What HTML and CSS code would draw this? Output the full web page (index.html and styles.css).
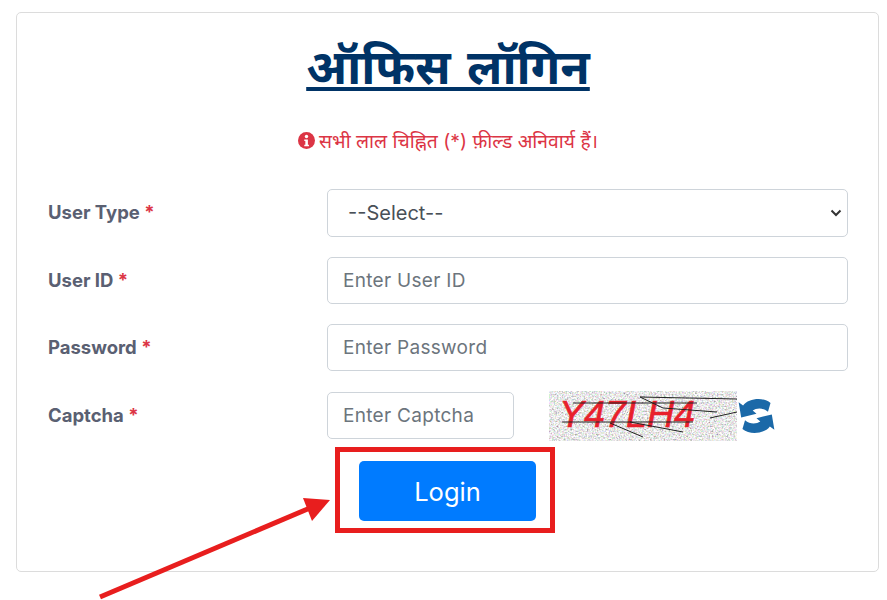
FILE: index.html
```html
<!DOCTYPE html>
<html lang="hi">
<head>
    <meta charset="UTF-8">
    <meta name="viewport" content="width=device-width, initial-scale=1.0">
    <title>ऑफिस लॉगिन</title>
    <link rel="stylesheet" href="styles.css">
</head>
<body>
    <div class="login-card">
        <h1 class="title">ऑफिस लॉगिन</h1>
        <p class="notice">
            <svg class="notice-icon" viewBox="0 0 16 16"><circle cx="8" cy="8" r="8" fill="#dc3545"/><circle cx="8" cy="4.3" r="1.6" fill="#fff"/><path d="M5.9 7h3.4v5h1v1.4H5.9V12h1V8.4h-1z" fill="#fff"/></svg>
            सभी लाल चिह्नित (*) फ़ील्ड अनिवार्य हैं।
        </p>
        <form class="login-form">
            <div class="form-row">
                <label class="field-label">User Type <span class="req">*</span></label>
                <div class="select-box">
                    <span>--Select--</span>
                    <svg class="caret" viewBox="0 0 12 8"><path d="M1.5 1.5 6 6l4.5-4.5" fill="none" stroke="#333" stroke-width="2"/></svg>
                </div>
            </div>
            <div class="form-row">
                <label class="field-label">User ID <span class="req">*</span></label>
                <input class="field-input" placeholder="Enter User ID">
            </div>
            <div class="form-row">
                <label class="field-label">Password <span class="req">*</span></label>
                <input class="field-input" placeholder="Enter Password">
            </div>
            <div class="form-row captcha-row">
                <label class="field-label">Captcha <span class="req">*</span></label>
                <div class="captcha-group">
                    <input class="field-input captcha-input" placeholder="Enter Captcha">
                    <svg class="captcha-img" viewBox="0 0 188 50">
                        <filter id="noise" x="0" y="0" width="100%" height="100%">
                            <feTurbulence type="fractalNoise" baseFrequency="0.6" numOctaves="2" seed="4"/>
                            <feColorMatrix type="matrix" values="1.1 0.4 0.4 0 -0.15  0.4 1.1 0.4 0 -0.15  0.4 0.4 1.1 0 -0.15  0 0 0 0 1"/>
                        </filter>
                        <rect width="188" height="50" filter="url(#noise)"/>
                        <text class="captcha-text" x="10" y="36" textLength="136" lengthAdjust="spacingAndGlyphs">Y47LH4</text>
                        <path d="M91 6 188 8M24 12H148M91 6l23 11 54 4M161 27l27-6M13 31H144M61 32l33 14M81 31l53 10" fill="none" stroke="#222" stroke-width="1"/>
                    </svg>
                    <svg class="refresh" viewBox="20 22 116 114">
                        <path d="M22 36 36 46C52 24 98 18 122 38L114 66C98 52 78 54 66 62L78 72 30 84z" fill="#1b69a8"/>
                        <path d="M22 36 36 46C52 24 98 18 122 38L114 66C98 52 78 54 66 62L78 72 30 84z" fill="#1b69a8" transform="rotate(180 78 79)"/>
                    </svg>
                </div>
            </div>
            <div class="form-row">
                <span></span>
                <div class="action">
                    <button class="login-btn" type="button">Login</button>
                    <div class="highlight"></div>
                </div>
            </div>
        </form>
    </div>
    <svg class="arrow" viewBox="0 0 887 600"><path d="M100 597 310 508" stroke="#e81e1e" stroke-width="5" fill="none"/><path d="M330 500 303 498 312 521z" fill="#e81e1e"/></svg>
</body>
</html>
```
FILE: styles.css
```css
*{
    margin: 0;
    padding: 0;
    box-sizing: border-box;
}
body{
    position: relative;
    height: 600px;
    overflow: hidden;
    background-color: #fff;
    font-family: "Inter", "Noto Sans", "Noto Sans Devanagari", sans-serif;
    color: #212529;
}
.login-card{
    width: 863px;
    height: 560px;
    margin: 12px 0 0 16px;
    padding: 0 30px 0 31px;
    border: 1px solid #dcdcdc;
    border-radius: 5px;
}
.title{
    margin-top: 24px;
    text-align: center;
    font-size: 48px;
    line-height: 60px;
    font-weight: 700;
    word-spacing: 5px;
    color: #003366;
    text-decoration: underline;
}
.notice{
    margin-top: 31px;
    height: 24px;
    display: flex;
    align-items: center;
    justify-content: center;
    gap: 4px;
    font-size: 19.3px;
    color: #dc3545;
}
.notice-icon{
    width: 17px;
    height: 17px;
}
.login-form{
    margin-top: 37px;
    display: flex;
    flex-direction: column;
    gap: 20px;
}
.form-row{
    display: grid;
    grid-template-columns: 279px 1fr;
}
.field-label{
    padding-top: 12px;
    font-size: 18.5px;
    line-height: 22px;
    font-weight: 700;
    color: #5a6072;
}
.req{
    color: #dc3545;
}
.select-box{
    height: 48px;
    padding: 0 5px 0 20px;
    display: flex;
    align-items: center;
    justify-content: space-between;
    border: 1px solid #ced4da;
    border-radius: 5px;
    font-size: 20px;
    color: #495057;
}
.caret{
    width: 12px;
    height: 8px;
}
.field-input{
    width: 100%;
    height: 47px;
    padding: 0 15px;
    border: 1px solid #ced4da;
    border-radius: 5px;
    font-family: inherit;
    font-size: 19px;
    letter-spacing: 0.3px;
}
.field-input::placeholder{
    color: #6c757d;
    opacity: 1;
}
.captcha-row{
    margin-top: 1px;
}
.captcha-group{
    display: flex;
    align-items: flex-start;
}
.captcha-input{
    width: 187px;
    flex: none;
}
.captcha-img{
    width: 188px;
    height: 50px;
    margin: -1px 0 0 35px;
}
.captcha-text{
    font-family: "Liberation Sans", sans-serif;
    font-style: italic;
    font-size: 36px;
    fill: #e8202c;
    stroke: #e8202c;
    stroke-width: 0.6px;
}
.refresh{
    width: 37px;
    height: 38px;
    margin: 5px 0 0 1px;
}
.action{
    position: relative;
    width: 177px;
    margin-left: 32px;
}
.login-btn{
    width: 177px;
    height: 60px;
    border: none;
    border-radius: 5px;
    background-color: #007bff;
    color: #fff;
    font-family: inherit;
    font-size: 25.5px;
}
.highlight{
    position: absolute;
    left: -24px;
    right: -19px;
    top: -14px;
    bottom: -12px;
    border: 5px solid #e81e1e;
}
.arrow{
    position: absolute;
    left: 0;
    top: 0;
    width: 887px;
    height: 600px;
    pointer-events: none;
}
```
